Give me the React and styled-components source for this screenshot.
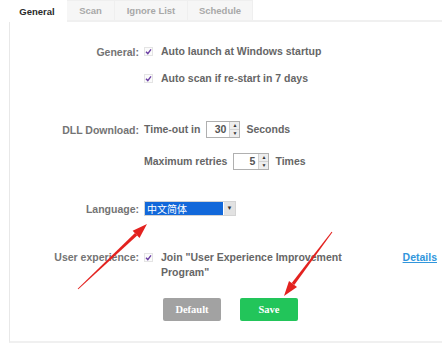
import React from 'react';
import styled, { createGlobalStyle } from 'styled-components';

const GlobalStyle = createGlobalStyle`
  html, body {
    margin: 0;
    padding: 0;
    background: #fff;
    overflow: hidden;
  }
  body {
    font-family: "Liberation Sans", Arial, sans-serif;
  }
`;

const Page = styled.div`
  position: relative;
  width: 442px;
  height: 347px;
  padding-left: 8px;
  box-sizing: border-box;
`;

const TabBar = styled.div`
  display: flex;
  height: 22px;
`;

const Tab = styled.div`
  width: ${(p) => p.w}px;
  display: flex;
  align-items: center;
  justify-content: center;
  font-size: 9.5px;
  font-weight: bold;
  color: ${(p) => (p.active ? '#2a2a2a' : '#a8a8a8')};
  background: ${(p) => (p.active ? '#fff' : '#f6f6f6')};
  border: 1px solid ${(p) => (p.active ? 'transparent' : '#efefef')};
  border-bottom: ${(p) => (p.active ? 'none' : '2px solid #f0f0f0')};
  border-left: none;
  box-sizing: border-box;
`;

const TabFill = styled.div`
  flex: 1;
  border-bottom: 2px solid #f0f0f0;
`;

const Panel = styled.div`
  margin-left: 1px;
  height: 321px;
  border-left: 1px solid #e8e8e8;
  border-bottom: 2px solid #f0f0f0;
  box-sizing: border-box;
  padding-top: 22px;
  padding-right: 5px;
`;

const Row = styled.div`
  display: grid;
  grid-template-columns: 129px 1fr auto;
  column-gap: 5px;
  align-items: ${(p) => (p.top ? 'start' : 'center')};
  margin-top: ${(p) => p.mt || 0}px;
  min-height: ${(p) => p.h || 14}px;
  font-size: 10.5px;
  font-weight: bold;
`;

const Label = styled.div`
  text-align: right;
  color: #747474;
  line-height: 14px;
`;

const Field = styled.div`
  display: flex;
  align-items: ${(p) => (p.top ? 'flex-start' : 'center')};
  gap: 5px;
  color: #666;
  line-height: 15px;
`;

const Check = styled.span`
  width: 9px;
  height: 9px;
  flex: none;
  display: inline-flex;
  align-items: center;
  justify-content: center;
  border: 1px solid #e4e4e4;
  background: #fbfbfb;
  box-sizing: border-box;
  margin: ${(p) => (p.top ? '3px' : '0')} 3px 0 0;
`;

const CheckText = styled.span`
  width: ${(p) => p.w || 'auto'};
`;

const Spinner = styled.span`
  display: inline-flex;
  align-items: stretch;
  width: ${(p) => p.w}px;
  height: 17px;
  border: 1px solid #b0b0b0;
  box-sizing: border-box;
  background: #fff;
  margin: 0 1px;
`;

const SpinValue = styled.span`
  flex: 1;
  text-align: right;
  padding-right: 3px;
  line-height: 15px;
  color: #555;
`;

const SpinButtons = styled.span`
  width: 9px;
  display: flex;
  flex-direction: column;
  border-left: 1px solid #d2d2d2;
  background: #ededed;
`;

const SpinBtn = styled.span`
  flex: 1;
  display: flex;
  align-items: center;
  justify-content: center;
  font-size: 5px;
  line-height: 1;
  color: #333;
  &:first-child {
    border-bottom: 1px solid #d2d2d2;
  }
`;

const Select = styled.span`
  display: inline-flex;
  width: 92px;
  height: 15px;
  border: 1px solid #d4d4d4;
  box-sizing: border-box;
  background: #fff;
`;

const SelectValue = styled.span`
  flex: 1;
  background: #1268da;
  color: #fff;
  font-weight: normal;
  font-size: 10px;
  line-height: 13px;
  padding-left: 2px;
  font-family: "Noto Sans CJK SC", "Liberation Sans", sans-serif;
  margin-right: 1px;
`;

const SelectBtn = styled.span`
  width: 11px;
  background: #e2e2e2;
  display: flex;
  align-items: center;
  justify-content: center;
  font-size: 6px;
  color: #333;
`;

const DetailsLink = styled.a`
  color: #3196dc;
  text-decoration: underline;
  font-weight: bold;
  line-height: 15px;
`;

const Buttons = styled.div`
  display: flex;
  gap: 19px;
  margin-top: ${(p) => p.mt}px;
  padding-left: 153px;
`;

const Button = styled.button`
  width: 58px;
  height: 23px;
  border: none;
  border-radius: 2px;
  font-family: "Liberation Serif", serif;
  font-weight: bold;
  font-size: 10.5px;
  color: #fff;
  background: ${(p) => (p.primary ? '#22c55a' : '#a2a2a2')};
`;

const Overlay = styled.svg`
  position: absolute;
  left: 0;
  top: 0;
  pointer-events: none;
`;

const Tick = () => (
  <svg width="7" height="7" viewBox="0 0 7 7">
    <path d="M1 3.8 L2.8 5.6 L6 1.4" fill="none" stroke="#6b3fa3" strokeWidth="1.4" />
  </svg>
);

const NumberBox = ({ value, w }) => (
  <Spinner w={w}>
    <SpinValue>{value}</SpinValue>
    <SpinButtons>
      <SpinBtn>▲</SpinBtn>
      <SpinBtn>▼</SpinBtn>
    </SpinButtons>
  </Spinner>
);

// red annotation arrow: tapered shaft + filled head
const Arrow = ({ tail, tip }) => {
  const dx = tip[0] - tail[0];
  const dy = tip[1] - tail[1];
  const len = Math.hypot(dx, dy);
  const ux = dx / len;
  const uy = dy / len;
  const px = -uy;
  const py = ux;
  const bx = tip[0] - ux * 15;
  const by = tip[1] - uy * 15;
  const shaft = [
    [tail[0] + px * 0.5, tail[1] + py * 0.5],
    [bx + px * 1.6, by + py * 1.6],
    [bx - px * 1.6, by - py * 1.6],
    [tail[0] - px * 0.5, tail[1] - py * 0.5],
  ];
  const head = [
    tip,
    [bx + px * 5, by + py * 5],
    [bx - px * 5, by - py * 5],
  ];
  const pts = (a) => a.map((q) => q.join(',')).join(' ');
  return (
    <g fill="#e3221f">
      <polygon points={pts(shaft)} />
      <polygon points={pts(head)} />
    </g>
  );
};

export default function App() {
  return (
    <Page>
      <GlobalStyle />
      <TabBar>
        <Tab active w={59}>General</Tab>
        <Tab w={48}>Scan</Tab>
        <Tab w={73}>Ignore List</Tab>
        <Tab w={65}>Schedule</Tab>
        <TabFill />
      </TabBar>
      <Panel>
        <Row>
          <Label>General:</Label>
          <Field>
            <Check><Tick /></Check>
            Auto launch at Windows startup
          </Field>
        </Row>
        <Row mt={12}>
          <Label />
          <Field>
            <Check><Tick /></Check>
            Auto scan if re-start in 7 days
          </Field>
        </Row>
        <Row mt={35} h={17}>
          <Label>DLL Download:</Label>
          <Field>
            Time-out in <NumberBox value="30" w={34} /> Seconds
          </Field>
        </Row>
        <Row mt={15} h={17}>
          <Label />
          <Field>
            Maximum retries <NumberBox value="5" w={36} /> Times
          </Field>
        </Row>
        <Row mt={31} h={15}>
          <Label>Language:</Label>
          <Field>
            <Select>
              <SelectValue>中文简体</SelectValue>
              <SelectBtn>▼</SelectBtn>
            </Select>
          </Field>
        </Row>
        <Row mt={34} top>
          <Label>User experience:</Label>
          <Field top>
            <Check top><Tick /></Check>
            <CheckText w="190px">Join "User Experience Improvement Program"</CheckText>
          </Field>
          <DetailsLink href="#">Details</DetailsLink>
        </Row>
        <Buttons mt={18}>
          <Button>Default</Button>
          <Button primary>Save</Button>
        </Buttons>
      </Panel>
      <Overlay width="442" height="347">
        <Arrow tail={[78, 289]} tip={[147, 224]} />
        <Arrow tail={[332, 232]} tip={[284, 296]} />
      </Overlay>
    </Page>
  );
}
